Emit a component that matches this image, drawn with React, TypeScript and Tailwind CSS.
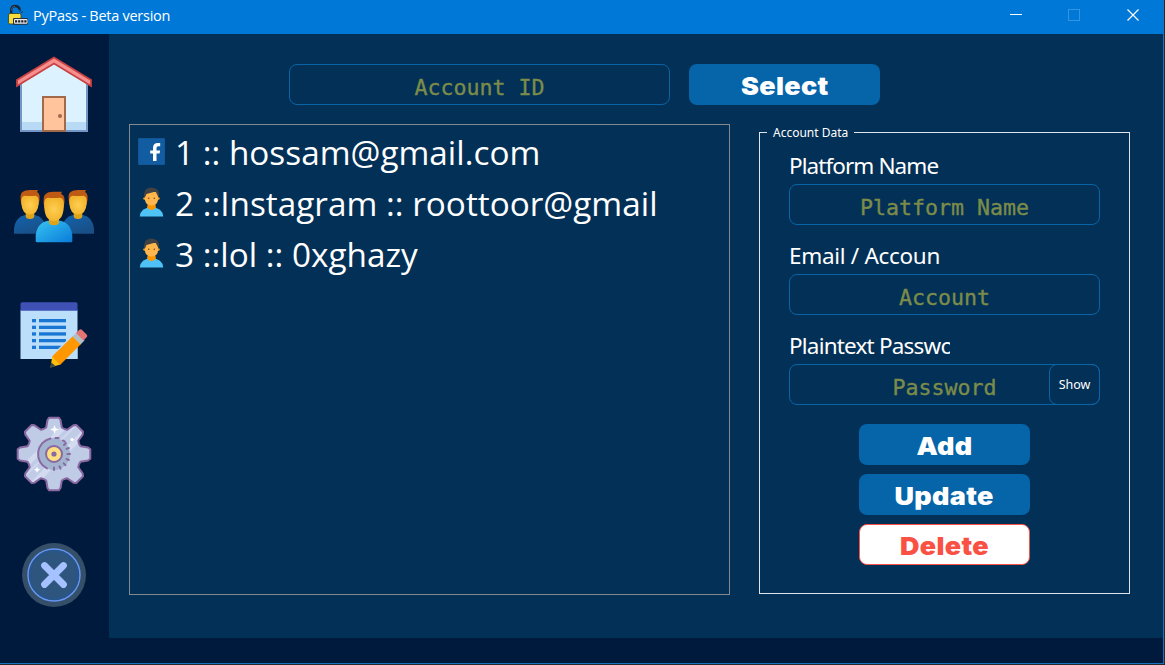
import React from "react";

function AppIcon() {
  return (
    <svg width="20" height="22" viewBox="0 0 20 22" className="-mt-1 shrink-0">
      <path d="M3.200 10V6C3.200 3 5 2 7 2s4.200.9 4.800 4" fill="none" stroke="#17283d" strokeWidth="2.400" />
      <path d="M3.600 6.500C3.600 3.200 5.200 2.400 7 2.400" fill="none" stroke="#5a6673" strokeWidth="0.800" />
      <path d="M11.500 8l1.200-2M13 8.700l1.800-1" stroke="#17283d" strokeWidth="1" />
      <rect x="0.500" y="9.500" width="12.500" height="10.500" rx="1.500" fill="#f7dc3c" stroke="#3d4a2c" strokeWidth="0.900" />
      <rect x="5" y="14" width="15" height="6.800" rx="1.200" fill="#2b2f36" />
      <rect x="6" y="15" width="13.500" height="4.800" rx="1" fill="#e8edf2" />
      <path d="M7 17.400h12" stroke="#1c2127" strokeWidth="2.300" strokeDasharray="2.200 0.900" />
    </svg>
  );
}

function HouseIcon() {
  return (
    <svg width="80" height="80" viewBox="0 0 80 80">
      <path d="M7 76V29L40 8l33 21v47z" fill="#dcf2fe" />
      <path d="M7 67h66v9H7z" fill="#b8daf5" />
      <path d="M7 27v49h66V27" fill="none" stroke="#7496c4" strokeWidth="2" />
      <path d="M29 76V42h22v34z" fill="#ffc49c" stroke="#a2694a" strokeWidth="2" />
      <circle cx="46" cy="61" r="2" fill="#a2694a" />
      <path d="M40 2.600L3 25v6L40 8.600 77 31v-6z" fill="#f78f8f" stroke="#c74343" strokeWidth="1.800" />
    </svg>
  );
}

function Person({ front }: { front?: boolean }) {
  return (
    <g>
      <path
        d={front ? "M-18.300 65.800V60Q-16.500 45 0 45T18.300 60v5.800q0 1.500-1.500 1.500h-33.600q-1.500 0-1.500-1.500z" : "M-16 58.700V54Q-14.500 39.500 0 39.500T16 54v4.700z"}
        fill={front ? "url(#shirtFront)" : "url(#shirtBack)"}
      />
      {front ? (
        <g>
          <path d="M-5 41v6.500q0 2.800 5 2.800t5-2.800V41z" fill="#dda319" />
          <path d="M-9.600 33Q-12 21 -8 18.800q2-2 7-2H8l-1 2q5.500 1.500 2.600 14z" fill="#bf5a14" />
          <path d="M-9.800 27.500Q-9 22-4 23H4Q9 22 9.800 27.500V32Q9 46 0 46T-9.800 32z" fill="url(#face)" />
        </g>
      ) : (
        <g>
          <path d="M-4.300 36v5q0 3 4.300 3t4.300-3v-5z" fill="#dda319" />
          <path d="M-8.500 30Q-11 18-7 16.800-5 15 0 15H8l-1 2q4.500 2 1.500 13z" fill="#bf5a14" />
          <path d="M-8.700 25Q-8 20-3 21H3Q8 20 8.700 25v3Q8 39.500 0 39.500T-8.700 28z" fill="url(#face)" />
        </g>
      )}
    </g>
  );
}

function UsersIcon() {
  return (
    <svg width="80" height="80" viewBox="0 0 80 80">
      <defs>
        <radialGradient id="face">
          <stop offset="0" stopColor="#ffcf54" />
          <stop offset="1" stopColor="#f3b52d" />
        </radialGradient>
        <linearGradient id="shirtFront" x1="0" y1="0" x2="1" y2="1">
          <stop offset="0.1" stopColor="#33bef0" />
          <stop offset="1" stopColor="#0a7bd8" />
        </linearGradient>
        <linearGradient id="shirtBack" x1="0" y1="0" x2="0.600" y2="1">
          <stop offset="0" stopColor="#1264b0" />
          <stop offset="1" stopColor="#194f86" />
        </linearGradient>
      </defs>
      <g transform="translate(16 0)"><Person /></g>
      <g transform="translate(64 0)"><Person /></g>
      <g transform="translate(40 0)"><Person front /></g>
    </svg>
  );
}

function NotesIcon() {
  const rows = [24, 30.7, 37.3, 44, 50.7];
  return (
    <svg width="80" height="80" viewBox="0 0 80 80">
      <path d="M6.500 15H63.500v49H6.500z" fill="#bbdefb" />
      <path d="M6.500 15.700V9q0-1.700 1.700-1.700h53.600q1.700 0 1.700 1.700v6.700z" fill="#3f51b5" />
      {rows.map((y) => (
        <g key={y} fill="#1976d2">
          <rect x="18" y={y} width="4" height="3.300" />
          <rect x="25" y={y} width="27" height="3.300" />
        </g>
      ))}
      <path d="M34 64L60 38l3.500 3v23z" fill="#bbdefb" />
      <path d="M38 61.500L59 41l8 8-21 21z" fill="#ff9800" />
      <path d="M58.500 41.500l4-4 8 8-4 4z" fill="#b0bec5" />
      <path d="M62 38l3.400-3.300q1.200-1 2.400 0l5 5q1 1.200 0 2.400L69.500 45.500z" fill="#e57373" />
      <path d="M38.200 61.500l8 8-9.700 3z" fill="#ffc107" />
      <path d="M37.400 67.500l4.100 3.600-5 1.700z" fill="#37474f" />
    </svg>
  );
}

function gearPath() {
  const points: string[] = [];
  for (let i = 0; i < 8; i++) {
    const a = (i * Math.PI) / 4;
    const local = [
      [-10.3, -25], [-7.8, -26.5], [-6.5, -34], [-4.8, -36.3],
      [4.8, -36.3], [6.5, -34], [7.8, -26.5], [10.3, -25],
    ];
    local.forEach(([x, y]) => {
      const px = 40 + x * Math.cos(a) - y * Math.sin(a);
      const py = 39 + x * Math.sin(a) + y * Math.cos(a);
      points.push(px.toFixed(2) + " " + py.toFixed(2));
    });
  }
  return "M" + points.join("L") + "z";
}

function GearIcon() {
  const d = gearPath();
  return (
    <svg width="80" height="80" viewBox="0 0 80 80">
      <defs><clipPath id="gearClip"><path d={d} /></clipPath></defs>
      <path d={d} fill="#c0cbe6" />
      <g clipPath="url(#gearClip)" stroke="#d3dbf0">
        <path d="M0 62L60 2" strokeWidth="5" />
        <path d="M14 74L78 10" strokeWidth="6" />
        <path d="M7 65L67 5" strokeWidth="1.500" />
      </g>
      <path d={d} fill="none" stroke="#8a69a3" strokeWidth="2" strokeLinejoin="round" />
      <circle cx="40" cy="39" r="16" fill="#a2b4cf" />
      <path d="M36.500 23.400A16 16 0 0 0 33 53.400M41.500 23h3M49 25.500l1.800 1.200" fill="none" stroke="#8a69a3" strokeWidth="2" strokeLinecap="round" />
      <g stroke="#8a69a3" strokeWidth="2" strokeLinecap="round">
        {[-42, -22, 0, 22, 44, 66, 90].map((a) => (
          <path key={a} d="M53.500 39h2.500" transform={"rotate(" + a + " 40 39)"} />
        ))}
      </g>
      <circle cx="40" cy="39" r="8" fill="#ffe080" stroke="#8a69a3" strokeWidth="2" />
      <circle cx="40" cy="39" r="2.600" fill="#8a69a3" />
      <g fill="#fff">
        <path d="M40.500 10l1.200 3.300 3.300 1.200-3.300 1.200-1.200 3.300-1.200-3.300-3.300-1.200 3.300-1.200z" />
        <path d="M23 51.500l1 2.200 2.200 1-2.200 1-1 2.200-1-2.200-2.200-1 2.200-1z" />
        <circle cx="58" cy="24.600" r="1.700" />
      </g>
    </svg>
  );
}

function CloseIcon() {
  return (
    <svg width="80" height="80" viewBox="0 0 80 80">
      <circle cx="40" cy="40" r="32" fill="#344f67" />
      <circle cx="40" cy="40" r="26" fill="#2d557d" stroke="#6594f2" strokeWidth="1.500" />
      <circle cx="40" cy="40" r="24" fill="none" stroke="#28568a" strokeWidth="2" />
      <path d="M30.500 30.500l19 19M49.500 30.500l-19 19" stroke="#a5c1ff" strokeWidth="6.800" strokeLinecap="round" />
    </svg>
  );
}

function FacebookIcon() {
  return (
    <svg width="27" height="27" viewBox="0 0 27 27" className="-mt-[3px]">
      <rect width="27" height="27" rx="1" fill="#115797" />
      <rect x="1" y="1" width="25" height="25" fill="#125ca2" />
      <path d="M15 23V15.500h-2.800v-3H15V10q0-5 4.800-5h2.400v3.200h-2q-1.700 0-1.700 1.800v2.500h3.600l-.5 3h-3.100V23z" fill="#fff" />
    </svg>
  );
}

function UserIcon() {
  return (
    <svg width="27" height="30" viewBox="0 0 27 30" className="-mt-[3px]">
      <path d="M1.800 29.500Q2.500 20.500 13.500 20.500T25.200 29.500z" fill="#4fc3f7" />
      <path d="M9 20.500q4.500 5 9 0L17 16h-7z" fill="#ff9800" />
      <circle cx="6.600" cy="11.500" r="1.300" fill="#ffa726" />
      <circle cx="20.400" cy="11.500" r="1.300" fill="#ffa726" />
      <path d="M7 5h13v8q-.5 5-6.500 5.500Q7.500 18 7 13z" fill="#ffb74d" />
      <path d="M6 10.500V7.500Q6.500.5 13.500.5q7.500.5 7.500 7v3L19.600 8.500 17.500 4.500 8.500 7 7.200 10z" fill="#424242" />
      <circle cx="10.700" cy="11.300" r=".8" fill="#784719" />
      <circle cx="16.300" cy="11.300" r=".8" fill="#784719" />
    </svg>
  );
}

function Field({ text, className }: { text: string; className: string }) {
  return (
    <div className={"flex h-[41px] items-center justify-center rounded-lg border border-[#0864a4] pt-[7px] font-['DejaVu_Sans_Mono',monospace] text-[21.600px] leading-[30px] whitespace-pre text-[#7b8c4a] [-webkit-text-stroke:0.350px_#7b8c4a] " + className}>
      {text}
    </div>
  );
}

function Button({ text, className }: { text: string; className: string }) {
  return (
    <button className={"flex h-[41px] items-center justify-center rounded-lg pt-[3px] font-['Inter',sans-serif] text-[24.500px] leading-[30px] font-black " + className}>
      <span className="scale-x-[1.100] tracking-[0.300px]">{text}</span>
    </button>
  );
}

function Label({ text, className }: { text: string; className: string }) {
  return (
    <div className={"h-[30px] w-[161px] overflow-hidden font-['Noto_Sans',sans-serif] text-[22.500px] leading-[29px] whitespace-nowrap text-white " + className}>
      {text}
    </div>
  );
}

export default function App() {
  return (
    <div className="flex h-[665px] w-[1165px] flex-col border-r border-b border-[#27282b] bg-[#001a3d]">
      <div className="flex min-h-0 flex-1 flex-col border-r border-b border-[#1872bd]">
        <header className="flex h-[34px] shrink-0 items-center bg-[#0078d7] pl-2 text-white">
          <AppIcon />
          <span className="ml-[5px] flex-1 pb-[3px] font-['Open_Sans',sans-serif] text-[14.500px] tracking-[-0.270px]">PyPass - Beta version</span>
          <svg width="153" height="34" viewBox="0 0 153 34" fill="none">
            <path d="M0 14.500h12" stroke="#fff" />
            <rect x="58.500" y="9.500" width="11" height="11" stroke="#3594e0" />
            <path d="M117.500 9.500l11 11M128.500 9.500l-11 11" stroke="#fff" strokeWidth="1.200" />
          </svg>
        </header>
        <div className="flex h-[604px] shrink-0">
          <nav className="flex w-[109px] shrink-0 flex-col gap-10 pt-[21px] pl-[14px]">
            <HouseIcon />
            <UsersIcon />
            <NotesIcon />
            <GearIcon />
            <CloseIcon />
          </nav>
          <main className="flex flex-1 flex-col bg-[#033056] pt-[30px] pl-5">
            <div className="flex gap-[19px] pl-[160px]">
              <Field text="Account ID" className="w-[381px]" />
              <Button text="Select" className="w-[191px] bg-[#0664a8] text-white" />
            </div>
            <div className="mt-[19px] flex">
              <ul className="h-[471px] w-[601px] border border-[#85888c] pt-[2px] pl-2 font-['Open_Sans',sans-serif] text-[33.330px] leading-[51px] whitespace-pre text-white">
                <li className="flex h-[51px] items-center gap-[10px]"><FacebookIcon /><span>1 :: hossam@gmail.com</span></li>
                <li className="flex h-[51px] items-center gap-[10px]"><UserIcon /><span>2 ::Instagram :: roottoor@gmail</span></li>
                <li className="flex h-[51px] items-center gap-[10px]"><UserIcon /><span>3 ::lol :: 0xghazy</span></li>
              </ul>
              <fieldset className="ml-[29px] h-[470px] w-[371px] border border-[#dfe5ea] pl-[7px]">
                <legend className="h-4 w-[87px] px-[6px] font-['Noto_Sans',sans-serif] text-[12px] leading-[18px] whitespace-nowrap text-white">Account Data</legend>
                <div className="flex flex-col pt-[11px] pl-[22px]">
                  <Label text="Platform Name" className="mb-[3px] tracking-[-0.920px]" />
                  <Field text="Platform Name" className="w-[311px]" />
                  <Label text="Email / Accoun" className="mt-4 mb-[3px] tracking-[-0.300px]" />
                  <Field text="Account" className="w-[311px]" />
                  <Label text="Plaintext Password" className="mt-4 mb-[3px] tracking-[-0.800px]" />
                  <div className="flex">
                    <Field text="Password" className="w-[311px]" />
                    <button className="-ml-[51px] h-[41px] w-[51px] rounded-lg border border-[#0864a4] pt-[2px] font-['Noto_Sans',sans-serif] text-[12.500px] text-white">Show</button>
                  </div>
                  <div className="mt-[19px] ml-[70px] flex flex-col gap-[9px]">
                    <Button text="Add" className="w-[171px] bg-[#0664a8] text-white" />
                    <Button text="Update" className="w-[171px] bg-[#0664a8] text-white" />
                    <Button text="Delete" className="w-[171px] border border-[#fa5145] bg-white text-[#fa5145]" />
                  </div>
                </div>
              </fieldset>
            </div>
          </main>
        </div>
      </div>
    </div>
  );
}
